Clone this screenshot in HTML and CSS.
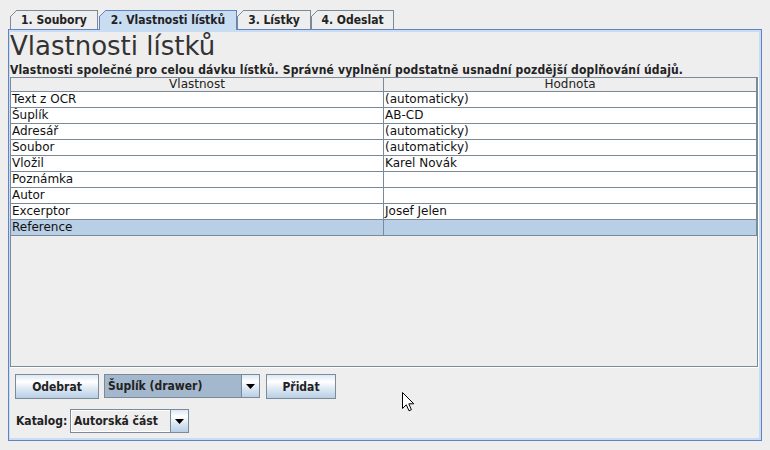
FILE: index.html
```html
<!DOCTYPE html>
<html lang="cs">
<head>
<meta charset="utf-8">
<title>Vlastnosti lístků</title>
<link rel="stylesheet" href="styles.css">
</head>
<body>
<div class="app">
  <div class="tabs">
    <div class="tab t1">1. Soubory</div>
    <div class="tab t2 sel">2. Vlastnosti lístků</div>
    <div class="tab t3">3. Lístky</div>
    <div class="tab t4">4. Odeslat</div>
  </div>
  <div class="pane">
    <div class="pane-inner">
      <h1 class="title">Vlastnosti lístků</h1>
      <div class="subtitle">Vlastnosti společné pro celou dávku lístků. Správné vyplnění podstatně usnadní pozdější doplňování údajů.</div>
      <div class="scroll">
        <div class="thead"><div class="th">Vlastnost</div><div class="th">Hodnota</div></div>
        <div class="row"><div class="td">Text z OCR</div><div class="td">(automaticky)</div></div>
        <div class="row"><div class="td">Šuplík</div><div class="td">AB-CD</div></div>
        <div class="row"><div class="td">Adresář</div><div class="td">(automaticky)</div></div>
        <div class="row"><div class="td">Soubor</div><div class="td">(automaticky)</div></div>
        <div class="row"><div class="td">Vložil</div><div class="td">Karel Novák</div></div>
        <div class="row"><div class="td">Poznámka</div><div class="td"></div></div>
        <div class="row"><div class="td">Autor</div><div class="td"></div></div>
        <div class="row"><div class="td">Excerptor</div><div class="td">Josef Jelen</div></div>
        <div class="row sel"><div class="td">Reference</div><div class="td"></div></div>
      </div>
      <div class="controls">
        <div class="line1">
          <div class="btn b-odebrat">Odebrat</div>
          <div class="combo c-suplik">
            <div class="val focus">Šuplík (drawer)</div>
            <div class="arr"><svg width="9" height="5" viewBox="0 0 9 5"><path d="M0 0H9L4.5 5Z" fill="#000"/></svg></div>
          </div>
          <div class="btn b-pridat">Přidat</div>
        </div>
        <div class="line2">
          <div class="label">Katalog:</div>
          <div class="combo c-katalog">
            <div class="val">Autorská část</div>
            <div class="arr"><svg width="9" height="5" viewBox="0 0 9 5"><path d="M0 0H9L4.5 5Z" fill="#000"/></svg></div>
          </div>
        </div>
      </div>
    </div>
  </div>
</div>
<svg class="cursor" width="13" height="20" viewBox="0 0 13 20"><path d="M0.5 0.5V16.5L4.3 12.8L7 18.8L9.4 17.7L6.8 11.8H11.8Z" fill="#fff" stroke="#000" stroke-width="1" stroke-linejoin="miter"/></svg>
</body>
</html>
```
FILE: styles.css
```css
html, body {
  margin: 0;
  padding: 0;
}
body {
  background: #eeeeee;
  width: 770px;
  height: 450px;
  overflow: hidden;
  position: relative;
  font-family: "DejaVu Sans", "Liberation Sans", sans-serif;
  color: #000;
}
.app {
  padding: 10px 0 0 8px;
}
.tabs {
  display: flex;
  padding-left: 2px;
  height: 19px;
  align-items: flex-start;
}
.tab {
  position: relative;
  box-sizing: border-box;
  height: 19px;
  border: 1px solid #7a8a99;
  border-bottom: none;
  background: #eeeeee;
  font-family: "DejaVu Sans Condensed", "DejaVu Sans", sans-serif;
  font-stretch: condensed;
  font-weight: bold;
  font-size: 12px;
  line-height: 18px;
  color: #222;
  text-align: center;
  white-space: nowrap;
}
.tab::before {
  content: "";
  position: absolute;
  left: -1px;
  top: -1px;
  width: 7px;
  height: 7px;
  background: linear-gradient(to bottom right, #eeeeee 0 44%, #7a8a99 44% 57%, transparent 57%);
}
.tab.sel {
  background: #c8ddf2;
  border-color: #6382bf;
  height: 20px;
  margin-bottom: -1px;
  z-index: 1;
}
.tab.sel::before {
  background: linear-gradient(to bottom right, #eeeeee 0 44%, #6382bf 44% 57%, transparent 57%);
}
.t1 { width: 88px; margin-right: 1px; }
.t2 { width: 138px; }
.t3 { width: 74px; }
.t4 { width: 83px; }

.pane {
  box-sizing: border-box;
  width: 754px;
  height: 412px;
  border: 1px solid #6382bf;
}
.pane-inner {
  box-sizing: border-box;
  height: 100%;
  border-style: solid;
  border-color: #c8ddf2;
  border-width: 2px 2px 2px 1px;
}
.title {
  margin: 0;
  font-family: "DejaVu Sans", sans-serif;
  font-weight: normal;
  font-size: 26px;
  line-height: 28px;
  color: #333333;
  white-space: nowrap;
}
.subtitle {
  margin-top: 3px;
  font-family: "DejaVu Sans Condensed", "DejaVu Sans", sans-serif;
  font-stretch: condensed;
  font-weight: bold;
  font-size: 12px;
  line-height: 14px;
  letter-spacing: 0.16px;
  color: #222;
  white-space: nowrap;
}
.scroll {
  box-sizing: border-box;
  width: 748px;
  height: 290px;
  border: 1px solid #7a8a99;
  box-shadow: 1px 1px 0 #ffffff;
  background: #eeeeee;
}
.thead {
  display: flex;
  box-sizing: border-box;
  height: 14px;
  border-bottom: 1px solid #7a8a99;
}
.th {
  box-sizing: border-box;
  width: 373px;
  border-right: 1px solid #7a8a99;
  text-align: center;
  font-size: 12px;
  line-height: 13px;
  color: #222;
}
.row {
  display: flex;
  box-sizing: border-box;
  height: 16px;
  border-bottom: 1px solid #7a8a99;
  background: #ffffff;
}
.row.sel {
  background: #b8cfe5;
}
.td {
  box-sizing: border-box;
  width: 373px;
  border-right: 1px solid #7a8a99;
  padding-left: 1px;
  font-size: 12px;
  line-height: 15px;
  white-space: nowrap;
  overflow: hidden;
  color: #111;
}

.controls {
  padding: 7px 0 0 5px;
}
.line1 {
  display: flex;
  height: 25px;
}
.line2 {
  display: flex;
  align-items: center;
  height: 24px;
  margin-top: 10px;
}
.btn, .label, .val {
  font-family: "DejaVu Sans Condensed", "DejaVu Sans", sans-serif;
  font-stretch: condensed;
  font-weight: bold;
  font-size: 12px;
  color: #222;
  white-space: nowrap;
}
.btn {
  box-sizing: border-box;
  border: 1px solid #7a8a99;
  background: linear-gradient(#dde8f3 0%, #ffffff 30%, #dde8f3 60%, #b8cfe5 100%);
  display: flex;
  align-items: center;
  justify-content: center;
}
.b-odebrat { width: 84px; margin-right: 5px; }
.b-pridat { width: 70px; margin-left: 6px; }
.combo {
  box-sizing: border-box;
  display: flex;
  border: 1px solid #7a8a99;
  background: #eeeeee;
}
.c-suplik { width: 156px; height: 24px; }
.c-katalog { width: 119px; height: 24px; }
.val {
  flex: 1;
  display: flex;
  align-items: center;
  padding-left: 2px;
  border: 1px solid #ffffff;
  border-right: none;
}
.val.focus {
  background: #a3b8cc;
  border-color: #a3b8cc;
}
.arr {
  box-sizing: border-box;
  width: 18px;
  border-left: 1px solid #7a8a99;
  background: linear-gradient(#dde8f3 0%, #ffffff 30%, #dde8f3 60%, #b8cfe5 100%);
  display: flex;
  align-items: center;
  justify-content: center;
}
.arr svg { display: block; }
.label {
  width: 55px;
  padding-left: 1px;
  box-sizing: border-box;
}
.cursor {
  position: absolute;
  left: 402px;
  top: 392px;
}
```
